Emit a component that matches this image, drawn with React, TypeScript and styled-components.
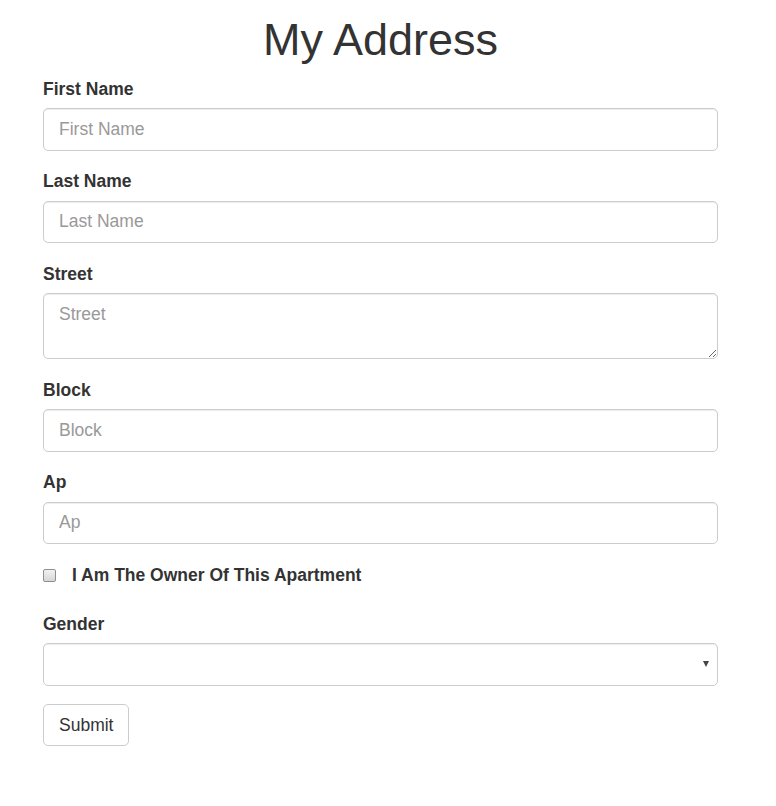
import styled, { createGlobalStyle } from "styled-components"

const GlobalStyle = createGlobalStyle`
  html, body {
    margin: 0;
    padding: 0;
    background: #fff;
  }
  body {
    font-family: "Liberation Sans", Arial, Helvetica, sans-serif;
    font-size: 17.5px;
    line-height: 1.42857;
    color: #333;
  }
  * {
    box-sizing: border-box;
  }
`

const Page = styled.div`
  padding: 0 0 40px 43px;
  width: 718px;
`

const Title = styled.h1`
  margin: 15px 0 12.5px;
  font-size: 45px;
  font-weight: 500;
  line-height: 1.1;
  text-align: center;
  color: #333;
`

const FormGroup = styled.div`
  margin-bottom: 18.75px;
`

const Label = styled.label`
  display: inline-block;
  margin-bottom: 6.25px;
  font-weight: bold;
`

const fieldStyles = `
  display: block;
  width: 100%;
  padding: 7.5px 15px;
  font-family: "Liberation Sans", Arial, Helvetica, sans-serif;
  font-size: 17.5px;
  line-height: 1.42857;
  color: #555;
  background: #fff;
  border: 1px solid #ccc;
  border-radius: 5px;
  box-shadow: inset 0 1px 1px rgba(0, 0, 0, 0.075);
  outline: none;
  &::placeholder {
    color: #999;
  }
`

const Input = styled.input`
  ${fieldStyles}
  height: 42.5px;
`

const TextArea = styled.textarea`
  ${fieldStyles}
  height: 66px;
  resize: vertical;
`

const SelectWrap = styled.div`
  position: relative;
  &::after {
    content: "";
    position: absolute;
    right: 9px;
    top: 18px;
    border-left: 3.5px solid transparent;
    border-right: 3.5px solid transparent;
    border-top: 6px solid #444;
    pointer-events: none;
  }
`

const Select = styled.select`
  ${fieldStyles}
  height: 42.5px;
  appearance: none;
`

const CheckRow = styled.label`
  display: flex;
  align-items: center;
  height: 25px;
  margin: 0 0 24px;
  font-weight: bold;
  cursor: pointer;
`

const CheckBox = styled.span`
  width: 13px;
  height: 13px;
  margin: 0 16px 0 0;
  border: 1px solid #8f8f8f;
  border-radius: 2px;
  background: linear-gradient(#f2f2f2, #d6d6d6);
  flex-shrink: 0;
`

const Button = styled.button`
  display: inline-block;
  padding: 7.5px 15px;
  font-family: "Liberation Sans", Arial, Helvetica, sans-serif;
  font-size: 17.5px;
  line-height: 1.42857;
  color: #333;
  background: #fff;
  border: 1px solid #ccc;
  border-radius: 5px;
  cursor: pointer;
`

const App = () => {
  return (
    <>
      <GlobalStyle />
      <Page>
        <Title>My Address</Title>
        <form>
          <FormGroup>
            <Label>First Name</Label>
            <Input placeholder="First Name" />
          </FormGroup>
          <FormGroup>
            <Label>Last Name</Label>
            <Input placeholder="Last Name" />
          </FormGroup>
          <FormGroup>
            <Label>Street</Label>
            <TextArea placeholder="Street" rows={2} />
          </FormGroup>
          <FormGroup>
            <Label>Block</Label>
            <Input placeholder="Block" />
          </FormGroup>
          <FormGroup>
            <Label>Ap</Label>
            <Input placeholder="Ap" />
          </FormGroup>
          <CheckRow>
            <CheckBox />
            I Am The Owner Of This Apartment
          </CheckRow>
          <FormGroup>
            <Label>Gender</Label>
            <SelectWrap>
              <Select defaultValue="">
                <option value=""></option>
                <option value="male">Male</option>
                <option value="female">Female</option>
              </Select>
            </SelectWrap>
          </FormGroup>
          <Button type="button">Submit</Button>
        </form>
      </Page>
    </>
  )
}

export default App
